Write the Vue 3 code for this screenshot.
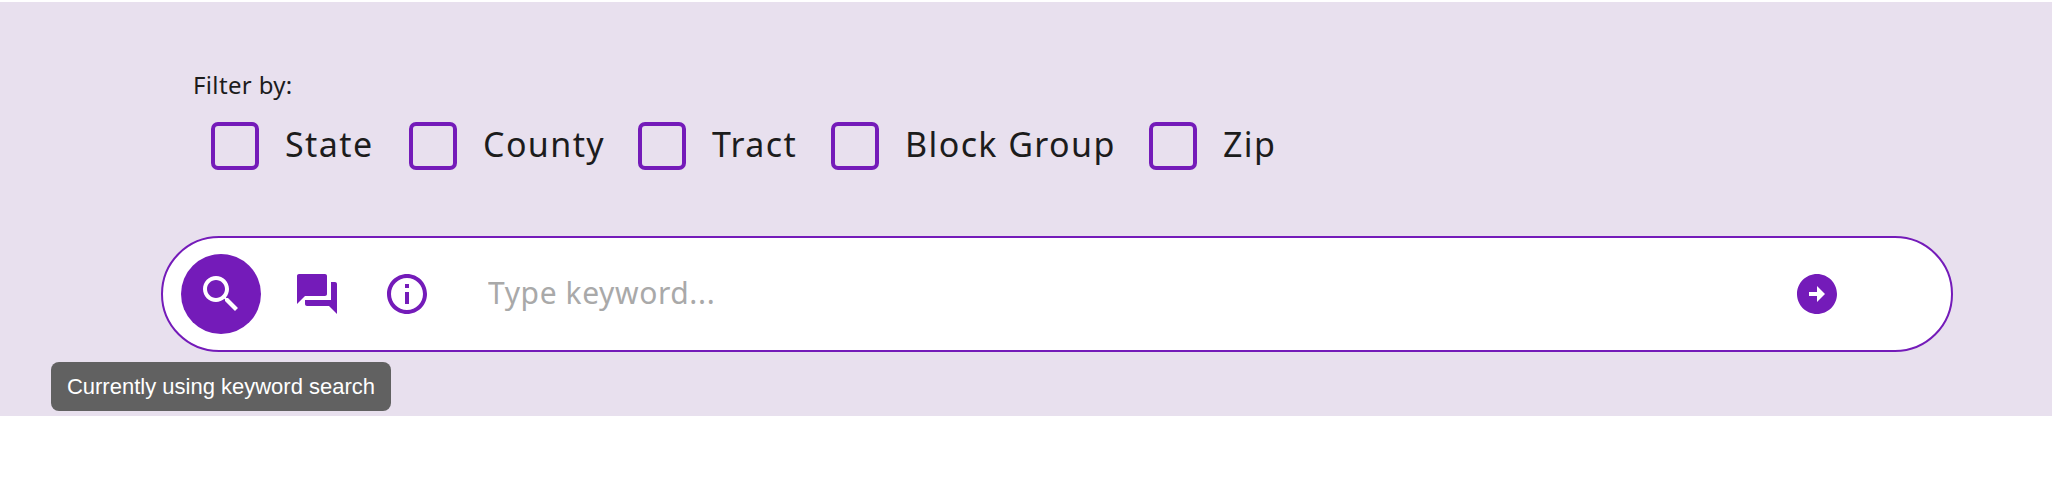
<template>
  <div class="page">
    <section class="panel">
      <div class="filters">
        <div class="filter-title">Filter by:</div>
        <div class="filter-row">
          <label v-for="item in filters" :key="item" class="filter-item">
            <input type="checkbox" class="box" />
            <span class="filter-label">{{ item }}</span>
          </label>
        </div>
      </div>

      <div class="search-wrap">
        <div class="search-bar">
          <button class="mode-btn active" aria-label="Keyword search">
            <svg viewBox="0 0 24 24" class="icon"><path :d="icons.search" /></svg>
          </button>
          <button class="mode-btn" aria-label="Chat">
            <svg viewBox="0 0 24 24" class="icon"><path :d="icons.chat" /></svg>
          </button>
          <button class="mode-btn" aria-label="Info">
            <svg viewBox="0 0 24 24" class="icon"><path :d="icons.info" /></svg>
          </button>
          <input class="search-input" type="text" placeholder="Type keyword..." />
          <button class="send-btn" aria-label="Submit">
            <svg viewBox="0 0 24 24" class="icon"><path :d="icons.send" /></svg>
          </button>
        </div>
        <div class="tooltip">Currently using keyword search</div>
      </div>
    </section>
  </div>
</template>

<script setup>
const filters = ['State', 'County', 'Tract', 'Block Group', 'Zip']

// material icons
const icons = {
  search: 'M15.5 14h-.79l-.28-.27C15.41 12.59 16 11.11 16 9.5 16 5.91 13.09 3 9.5 3S3 5.91 3 9.5 5.91 16 9.5 16c1.61 0 3.09-.59 4.23-1.57l.27.28v.79l5 4.99L20.49 19l-4.99-5zm-6 0C7.01 14 5 11.99 5 9.5S7.01 5 9.5 5 14 7.01 14 9.5 11.99 14 9.5 14z',
  chat: 'M21 6h-2v9H6v2c0 .55.45 1 1 1h11l4 4V7c0-.55-.45-1-1-1zm-4 6V3c0-.55-.45-1-1-1H3c-.55 0-1 .45-1 1v14l4-4h10c.55 0 1-.45 1-1z',
  info: 'M11 7h2v2h-2zm0 4h2v6h-2zm1-9C6.48 2 2 6.48 2 12s4.48 10 10 10 10-4.48 10-10S17.52 2 12 2zm0 18c-4.41 0-8-3.59-8-8s3.59-8 8-8 8 3.59 8 8-3.59 8-8 8z',
  send: 'M2 12c0 5.52 4.48 10 10 10s10-4.48 10-10S17.52 2 12 2 2 6.48 2 12zm10 1H8v-2h4V8l4 4-4 4v-3z'
}
</script>

<style>
html, body {
  background: #fff;
}
</style>

<style scoped>
.page {
  padding-top: 2px;
  font-family: "Noto Sans", Lato, sans-serif;
}

.panel {
  height: 414px;
  background: #e8e0ee;
  box-sizing: border-box;
  padding: 68px 100px 0 0;
}

.filters {
  padding-left: 193px;
}

.filter-title {
  font-size: 24px;
  line-height: 30px;
  letter-spacing: 0.35px;
  color: #1c1c1c;
}

.filter-row {
  display: grid;
  grid-template-columns: 198px 229px 193px 318px auto;
  align-items: center;
  margin-top: 22px;
  padding-left: 18px;
}

.filter-item {
  display: flex;
  align-items: center;
  gap: 26px;
}

.box {
  appearance: none;
  margin: 0;
  width: 48px;
  height: 48px;
  box-sizing: border-box;
  border: 4px solid #741bb9;
  border-radius: 7px;
  background: transparent;
}

.filter-label {
  font-size: 34px;
  line-height: 44px;
  letter-spacing: 1.4px;
  padding-bottom: 4px;
  color: #1c1c1c;
}

.search-wrap {
  position: relative;
  margin: 66px 0 0 161px;
}

.search-bar {
  display: flex;
  align-items: center;
  width: 1792px;
  height: 116px;
  box-sizing: border-box;
  border: 2px solid #741bb9;
  border-radius: 58px;
  background: #fff;
  padding: 0 110px 0 18px;
}

.mode-btn,
.send-btn {
  display: flex;
  align-items: center;
  justify-content: center;
  flex: none;
  padding: 0;
  border: none;
  background: none;
  color: #741bb9;
}

.mode-btn {
  width: 80px;
  height: 80px;
  margin-right: 32px;
  border-radius: 50%;
}

.mode-btn + .mode-btn {
  width: 48px;
  height: 48px;
  margin-right: 42px;
}

.mode-btn + .mode-btn + .mode-btn {
  margin-right: 57px;
}

.mode-btn.active {
  background: #741bb9;
  color: #fff;
}

.icon {
  display: block;
  width: 48px;
  height: 48px;
  fill: currentColor;
}

.search-input {
  flex: 1;
  min-width: 0;
  border: none;
  outline: none;
  padding: 0 0 4px;
  background: transparent;
  font: inherit;
  font-size: 30px;
  letter-spacing: 0.6px;
  color: #1c1c1c;
}

.search-input::placeholder {
  color: #a9a9a9;
  opacity: 1;
}

.tooltip {
  position: absolute;
  top: 126px;
  left: -110px;
  width: 340px;
  height: 49px;
  box-sizing: border-box;
  border-radius: 8px;
  background: #616161;
  color: #fff;
  font-family: "Liberation Sans", Arial, sans-serif;
  font-size: 22px;
  line-height: 49px;
  text-align: center;
  white-space: nowrap;
}
</style>
